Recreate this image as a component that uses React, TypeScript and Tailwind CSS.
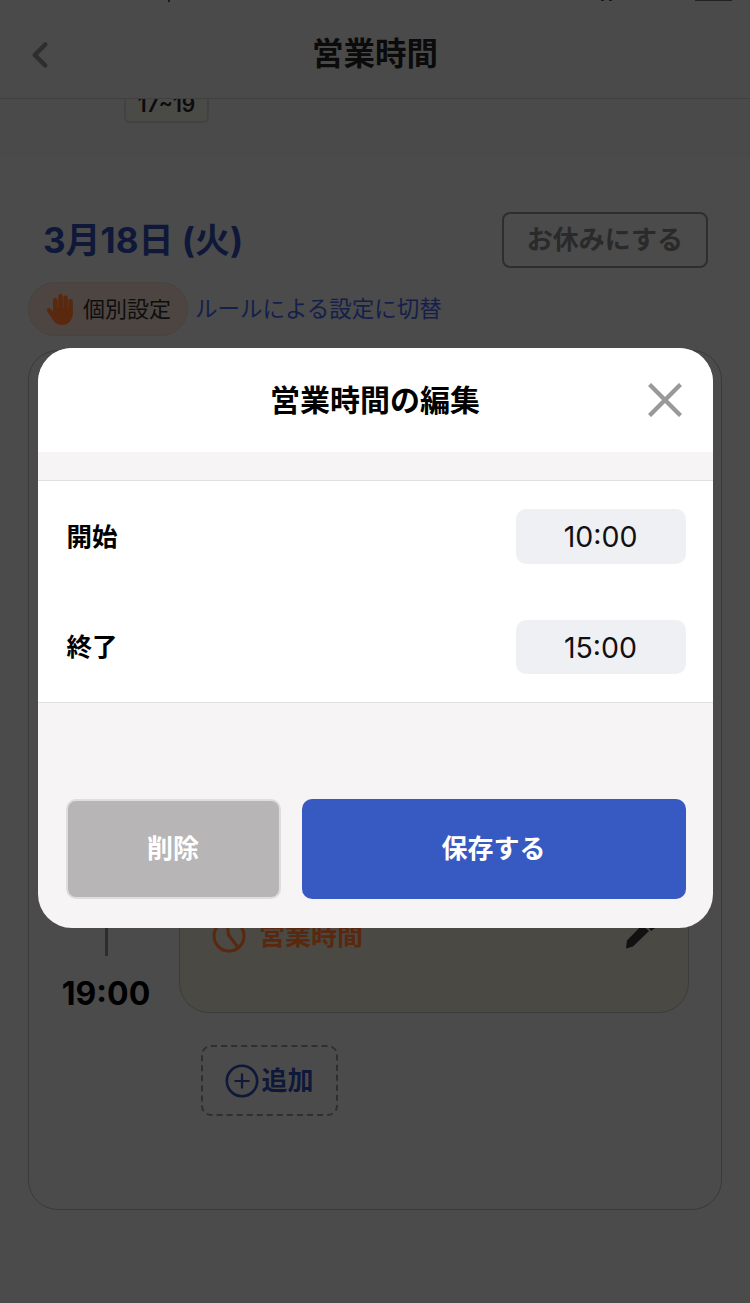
import React from "react";
import { ChevronLeft } from "lucide-react";

const jp = "[font-family:Inter,'Noto_Sans_CJK_JP',sans-serif]";

function Hand() {
  return (
    <svg width="28" height="32" viewBox="0 0 28 32" fill="#5a280e">
      <rect x="7" y="5" width="4.6" height="18" rx="2.3" />
      <rect x="12.2" y="1" width="4.6" height="22" rx="2.3" />
      <rect x="17.4" y="2.5" width="4.4" height="20" rx="2.2" />
      <rect x="22.4" y="6" width="4.4" height="17" rx="2.2" />
      <path d="M7 15H26.8V20C26.8 27.5 22 32 16.5 32C11 32 7.5 29 5.5 24.5L1 18C0 16 2.6 14.2 4.2 15.6L7 18.5Z" />
    </svg>
  );
}

function Clock() {
  return (
    <svg width="34" height="34" viewBox="0 0 34 34" fill="none" stroke="#5a280e" strokeWidth="3">
      <circle cx="17" cy="17" r="15" />
      <path d="M15 3 L16.5 16 L25 27" strokeLinecap="round" />
    </svg>
  );
}

function Pencil() {
  return (
    <svg width="36" height="32" viewBox="0 0 36 32" fill="#111111">
      <path d="M6 29.5 L7 21.5 L22 6 L29 12 L13 27.5 Z" />
      <path d="M27 6 L33 3 L35 9 L31 12 Z" />
    </svg>
  );
}

function AddIcon() {
  return (
    <svg width="34" height="34" viewBox="0 0 34 34" fill="none" stroke="#0f1838" strokeWidth="2.6">
      <circle cx="17" cy="17" r="15.2" />
      <path d="M17 9.5v15M9.5 17h15" strokeWidth="2.2" />
    </svg>
  );
}

export default function App() {
  return (
    <div className={`relative h-[1303px] w-[750px] overflow-hidden bg-[#4b4b4b] ${jp}`}>
      <header className="relative z-10 flex h-[99px] items-center justify-center border-b border-[#404040] bg-[#4a4a4a] pt-[10px]">
        <span className="absolute left-[168px] top-0 h-[2px] w-[2px] bg-[#1a1a1a]" />
        <span className="absolute left-[601px] top-0 h-[1px] w-[3px] bg-[#1a1a1a]" />
        <span className="absolute left-[609px] top-0 h-[1px] w-[3px] bg-[#1a1a1a]" />
        <span className="absolute left-[695px] top-0 h-[1px] w-[37px] bg-[#222222]" />
        <ChevronLeft className="absolute left-[19px] top-[34px] text-[#2e2e2e]" size={42} strokeWidth={2.6} />
        <h1 className="text-[31.5px] font-bold leading-none text-[#0b0b0b]">営業時間</h1>
      </header>

      <div className="h-[71px] bg-[#4a4a4a] pl-[124px]">
        <div className="-mt-[13px] flex h-[37px] w-[85px] items-center justify-center rounded-[6px] border-2 border-[#424240] bg-[#4a4a47] text-[21px] font-semibold leading-none text-[#0c0c0c]">
          17~19
        </div>
      </div>

      <main className="bg-[#4b4b4b] pt-[55px]">
        <div className="flex items-center justify-between pl-[43px] pr-[42px]">
          <h2 className="text-[35px] font-bold leading-none text-[#0f1838]">3月18日 (火)</h2>
          <button className="flex h-[56px] w-[206px] items-center justify-center rounded-[8px] border-2 border-[#2e2e2e] text-[26px] font-bold leading-none text-[#2a2a2a]">
            お休みにする
          </button>
        </div>

        <div className="ml-[28px] mt-[14px] flex items-center gap-[7px]">
          <div className="flex h-[54px] w-[160px] items-center gap-[9px] rounded-full border border-[#49423f] bg-[#4d4541] pl-[17px]">
            <Hand />
            <span className="text-[22px] leading-none text-[#0e0e0e]">個別設定</span>
          </div>
          <a className="text-[22.5px] leading-none text-[#14204a]">ルールによる設定に切替</a>
        </div>

        <section className="ml-[28px] mt-[14px] flex h-[860px] w-[694px] flex-col justify-end rounded-[30px] border border-[#3a3a3a] pb-[93px]">
          <div className="flex">
            <div className="flex w-[150px] flex-col items-center pl-[4px]">
              <div className="h-[77px] w-[3px] bg-[#2c2c2c]" />
              <div className="mt-[19px] text-[32px] font-bold leading-[38px] text-black">19:00</div>
            </div>
            <div className="relative flex h-[134px] w-[510px] rounded-b-[30px] border border-[#3c3c3a] bg-[#4a4944]">
              <div className="flex h-[112px] items-center gap-[13px] pl-[32px]">
                <Clock />
                <span className="text-[26px] font-bold leading-none text-[#5a280e]">営業時間</span>
              </div>
              <div className="absolute right-[32px] top-[39px]">
                <Pencil />
              </div>
            </div>
          </div>
          <button className="ml-[172px] mt-[32px] flex h-[71px] w-[137px] items-center justify-center gap-[2px] rounded-[10px] border-2 border-dashed border-[#2f2f2f] text-[26px] font-bold leading-none text-[#0f1838]">
            <AddIcon />
            追加
          </button>
        </section>
      </main>

      <div className="absolute inset-x-0 top-[348px] z-20 flex justify-center">
        <div className="flex h-[580px] w-[675px] flex-col overflow-hidden rounded-[34px] bg-[#f6f4f5]">
          <div className="relative flex h-[104px] items-center justify-center bg-white">
            <h3 className="text-[30px] font-bold leading-none text-black">営業時間の編集</h3>
            <svg className="absolute left-[610px] top-[35px]" width="34" height="34" viewBox="0 0 34 34" stroke="#999999" strokeWidth="4.4" fill="none">
              <path d="M1.5 1.5 32.5 32.5M32.5 1.5 1.5 32.5" />
            </svg>
          </div>
          <div className="mt-[28px] h-[223px] border-y border-[#e0e0e0] bg-white pl-[29px] pr-[28px]">
            <div className="flex items-center justify-between pt-[28px]">
              <span className="text-[25.5px] font-bold leading-none text-black">開始</span>
              <div className="mr-[-1px] flex h-[55px] w-[170px] items-center justify-center rounded-[10px] bg-[#eff0f4] pt-[2px] text-[28.5px] leading-none text-[#111111]">10:00</div>
            </div>
            <div className="mt-[56px] flex items-center justify-between">
              <span className="text-[25.5px] font-bold leading-none text-black">終了</span>
              <div className="mr-[-1px] flex h-[54px] w-[170px] items-center justify-center rounded-[10px] bg-[#eff0f4] pt-[2px] text-[28.5px] leading-none text-[#111111]">15:00</div>
            </div>
          </div>
          <div className="mt-[96px] flex gap-[21px] pl-[28px] pr-[27px]">
            <button className="flex h-[100px] w-[215px] items-center justify-center rounded-[10px] border-2 border-[#dedede] bg-[#b7b5b6] text-[26px] font-bold leading-none text-white">削除</button>
            <button className="flex h-[100px] flex-1 items-center justify-center rounded-[10px] bg-[#3759c2] text-[26px] font-bold leading-none text-white">保存する</button>
          </div>
        </div>
      </div>
    </div>
  );
}
